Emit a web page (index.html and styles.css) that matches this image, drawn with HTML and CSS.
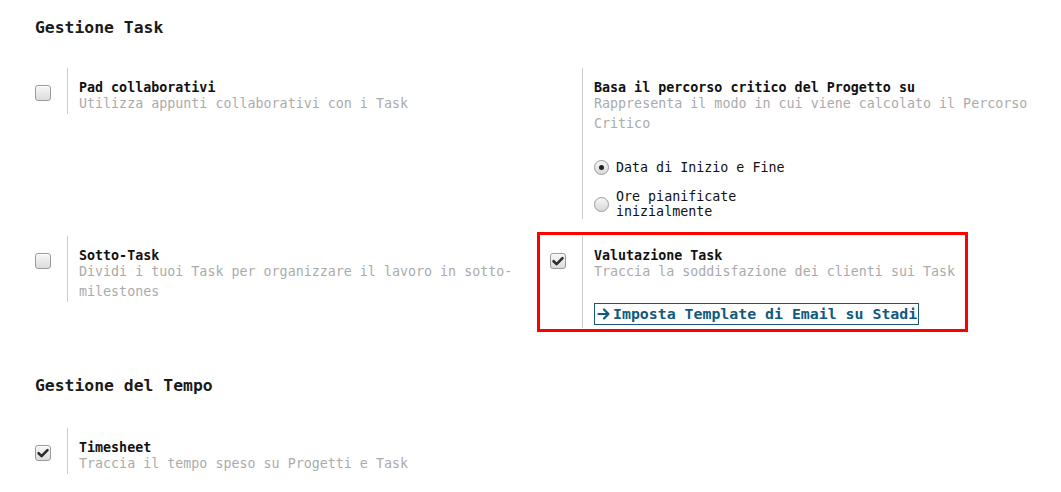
FILE: index.html
```html
<!DOCTYPE html>
<html lang="it">
<head>
<meta charset="utf-8">
<title>Impostazioni</title>
<link rel="stylesheet" href="styles.css">
</head>
<body>
<div class="page">
  <h2 class="section-title first">Gestione Task</h2>
  <div class="settings">
    <div class="setting">
      <div class="left-pane"><span class="checkbox"></span></div>
      <div class="right-pane">
        <div class="label">Pad collaborativi</div>
        <div class="desc">Utilizza appunti collaborativi con i Task</div>
      </div>
    </div>
    <div class="setting">
      <div class="left-pane"></div>
      <div class="right-pane">
        <div class="label">Basa il percorso critico del Progetto su</div>
        <div class="desc">Rappresenta il modo in cui viene calcolato il Percorso Critico</div>
        <div class="radios">
          <div class="radio-item"><span class="radio checked"></span><span class="radio-label">Data di Inizio e Fine</span></div>
          <div class="radio-item"><span class="radio"></span><span class="radio-label">Ore pianificate inizialmente</span></div>
        </div>
      </div>
    </div>
    <div class="setting">
      <div class="left-pane"><span class="checkbox"></span></div>
      <div class="right-pane">
        <div class="label">Sotto-Task</div>
        <div class="desc">Dividi i tuoi Task per organizzare il lavoro in sotto-milestones</div>
      </div>
    </div>
    <div class="setting highlighted">
      <div class="highlight-frame"></div>
      <div class="left-pane"><span class="checkbox checked"><svg viewBox="0 0 16 16" width="16" height="16"><path d="M3.6 8.2 L6.6 11.1 L12.5 5.2" fill="none" stroke="#2b2b2b" stroke-width="2.6" stroke-linecap="round" stroke-linejoin="round"/></svg></span></div>
      <div class="right-pane with-button">
        <div class="label">Valutazione Task</div>
        <div class="desc">Traccia la soddisfazione dei clienti sui Task</div>
        <a class="link-button" href="#"><svg class="arrow" viewBox="0 0 14 14" width="14" height="14"><path d="M1.5 7 H11.5 M7 2.5 L11.5 7 L7 11.5" fill="none" stroke="#0f5a80" stroke-width="2.2" stroke-linecap="round" stroke-linejoin="round"/></svg>Imposta Template di Email su Stadi</a>
      </div>
    </div>
  </div>

  <h2 class="section-title second">Gestione del Tempo</h2>
  <div class="settings tight">
    <div class="setting">
      <div class="left-pane"><span class="checkbox checked"><svg viewBox="0 0 16 16" width="16" height="16"><path d="M3.6 8.2 L6.6 11.1 L12.5 5.2" fill="none" stroke="#2b2b2b" stroke-width="2.6" stroke-linecap="round" stroke-linejoin="round"/></svg></span></div>
      <div class="right-pane">
        <div class="label">Timesheet</div>
        <div class="desc">Traccia il tempo speso su Progetti e Task</div>
      </div>
    </div>
  </div>
</div>
</body>
</html>
```

FILE: styles.css
```css
html, body {
  margin: 0;
  padding: 0;
  background: #ffffff;
}

body {
  font-family: "DejaVu Sans Mono", "Liberation Mono", monospace;
  font-size: 13.33px;
  color: #111111;
}

.page {
  padding: 18px 0 0 35px;
}

.section-title {
  margin: 0;
  font-size: 16.4px;
  line-height: 20px;
  font-weight: bold;
  color: #1a1a1a;
}

.section-title.second {
  margin-top: 48px;
}

.settings {
  display: grid;
  grid-template-columns: 515px 515px;
  align-items: start;
  row-gap: 17px;
  margin-top: 30px;
}

.settings.tight {
  margin-top: 32px;
}

.setting {
  display: flex;
  align-items: stretch;
  position: relative;
}

.left-pane {
  width: 32px;
  flex: none;
  padding-top: 17px;
}

.right-pane {
  border-left: 1px solid #cccccc;
  padding: 13px 24px 0 11px;
  flex: 1;
  min-width: 0;
}

.label {
  font-weight: bold;
  line-height: 14px;
  color: #111111;
}

.desc {
  margin-top: -1px;
  line-height: 20px;
  color: #ababab;
}

.checkbox {
  display: block;
  width: 16px;
  height: 16px;
  box-sizing: border-box;
  border: 1px solid #9a9a9a;
  border-radius: 3px;
  background: linear-gradient(#f7f7f7, #dcdcdc);
  box-shadow: inset 0 1px 0 #ffffff;
}

.checkbox svg {
  display: block;
  margin: -1px;
}

.radios {
  margin-top: 26px;
  display: flex;
  flex-direction: column;
  gap: 14px;
  width: 200px;
}

.radio-item {
  display: flex;
  align-items: center;
}

.radio-label {
  line-height: 15px;
  color: #111111;
}

.radio {
  flex: none;
  width: 15px;
  height: 15px;
  box-sizing: border-box;
  margin: 0 7px 0 0;
  border: 1px solid #9a9a9a;
  border-radius: 50%;
  background: linear-gradient(#f7f7f7, #d8d8d8);
  display: flex;
  align-items: center;
  justify-content: center;
}

.radio.checked::after {
  content: "";
  width: 5px;
  height: 5px;
  border-radius: 50%;
  background: #222222;
}

.with-button {
  padding-bottom: 3px;
}

.link-button {
  display: inline-flex;
  align-items: center;
  margin-top: 21px;
  border: 1px solid #1b5676;
  padding: 0 1px 0 2px;
  font-size: 14.86px;
  line-height: 20px;
  font-weight: bold;
  color: #0f5a80;
  text-decoration: none;
  white-space: nowrap;
}

.link-button .arrow {
  margin-right: 2px;
}

.highlight-frame {
  position: absolute;
  left: -13px;
  top: -4px;
  width: 431px;
  height: 100px;
  box-sizing: border-box;
  border: 3px solid #ff0000;
  pointer-events: none;
}
```
